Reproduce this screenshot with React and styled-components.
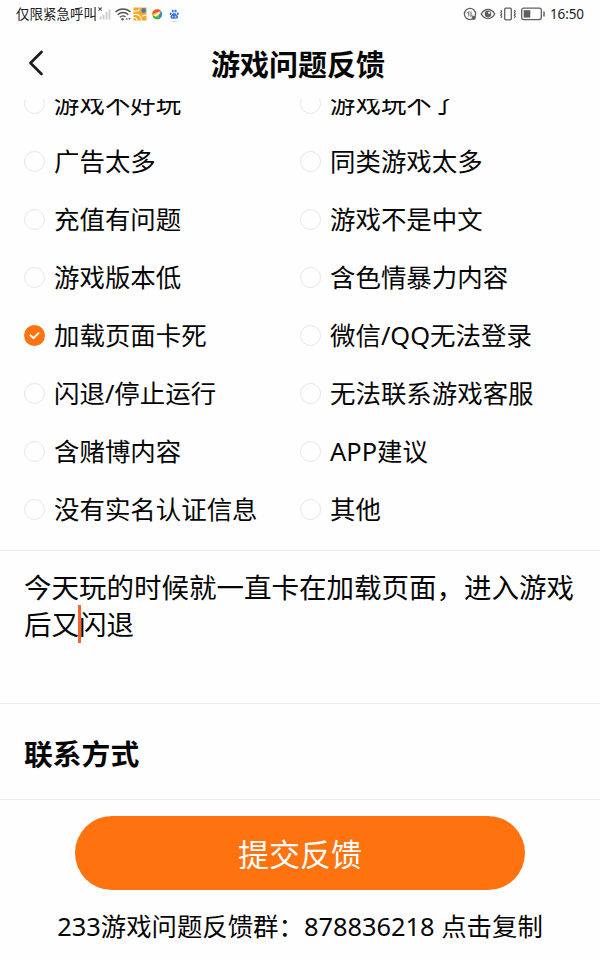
import React from "react";
import styled, { createGlobalStyle } from "styled-components";

const GlobalStyle = createGlobalStyle`
    * {
        box-sizing: border-box;
    }
    body {
        margin: 0;
        background: #fefefe;
        color: #060606;
        font-family: "Noto Sans", "Noto Sans CJK SC", sans-serif;
    }
`
const Page = styled.div`
    width: 600px;
    height: 960px;
    display: flex;
    flex-direction: column;
    overflow: hidden;
    background: #fefefe;
`
const StatusBar = styled.div`
    height: 28px;
    flex: none;
    display: flex;
    align-items: center;
    justify-content: space-between;
    padding: 0 16px;
    font-size: 13.5px;
    line-height: 28px;
    color: #222;
`
const StatusGroup = styled.div`
    display: flex;
    align-items: center;
    svg {
        display: block;
    }
`
const Clock = styled.span`
    font-size: 13.5px;
    letter-spacing: -0.1px;
    margin-left: 4px;
`
const Header = styled.header`
    height: 71px;
    flex: none;
    display: grid;
    grid-template-columns: 60px 1fr 64px;
    align-items: center;
`
const BackButton = styled.button`
    border: 0;
    background: none;
    padding: 0 0 1px 27px;
    height: 40px;
    display: flex;
    align-items: center;
`
const Title = styled.h1`
    margin: 3px 0 0;
    font-size: 29px;
    line-height: 40px;
    font-weight: 700;
    text-align: center;
`
const OptionList = styled.div`
    height: 451px;
    flex: none;
    overflow: hidden;
    display: flex;
    flex-direction: column;
    justify-content: flex-end;
    padding: 0 24px 12px;
`
const OptionRow = styled.div`
    flex: none;
    height: 58px;
    display: grid;
    grid-template-columns: 276px 276px;
    align-items: center;
`
const Option = styled.label`
    display: flex;
    align-items: center;
    gap: 9px;
    font-size: 25.45px;
    line-height: 36px;
    white-space: nowrap;
`
const OptionText = styled.span`
    padding-bottom: 1px;
`
const Radio = styled.span`
    width: 21px;
    height: 21px;
    flex: none;
    display: flex;
    align-items: center;
    justify-content: center;
    border-radius: 50%;
    border: ${(props) => (props.$checked ? "0" : "1.5px solid #e6e6e6")};
    background: ${(props) => (props.$checked ? "#ff7210" : "transparent")};
`
const Description = styled.div`
    height: 153px;
    flex: none;
    border-top: 1px solid #ebebeb;
    padding: 18px 24px 0;
    font-size: 27.5px;
    line-height: 37px;
`
const Line = styled.div`
    display: flex;
    white-space: nowrap;
`
const Caret = styled.span`
    width: 3px;
    height: 38px;
    margin: -1px -2px 0 -1px;
    background: #f0662c;
`
const Contact = styled.section`
    height: 96px;
    flex: none;
    border-top: 1px solid #ebebeb;
    padding: 0 24px;
    display: flex;
    align-items: center;
`
const SectionTitle = styled.h2`
    margin: 5px 0 0;
    font-size: 28.8px;
    line-height: 40px;
    font-weight: 700;
`
const Footer = styled.footer`
    flex: 1;
    border-top: 1px solid #ebebeb;
    padding-top: 16px;
    display: flex;
    flex-direction: column;
    align-items: center;
`
const SubmitButton = styled.button`
    width: 450px;
    height: 74px;
    border: 0;
    border-radius: 37px;
    padding: 2px 0 0;
    background: #ff7210;
    color: #fff;
    font-family: inherit;
    font-size: 31px;
    line-height: 40px;
`
const GroupLink = styled.p`
    margin: 18px 0 0;
    font-size: 25.4px;
    line-height: 36px;
    white-space: nowrap;
`

const rows = [
    ["游戏不好玩", "游戏玩不了"],
    ["广告太多", "同类游戏太多"],
    ["充值有问题", "游戏不是中文"],
    ["游戏版本低", "含色情暴力内容"],
    ["加载页面卡死", "微信/QQ无法登录"],
    ["闪退/停止运行", "无法联系游戏客服"],
    ["含赌博内容", "APP建议"],
    ["没有实名认证信息", "其他"],
]
const selected = "加载页面卡死"

function LeftIcons() {
    return (
        <svg width="84" height="18" viewBox="0 0 84 18" fill="none">
            {/* no sim signal */}
            <path d="M1.5 2.5l3.2 3.2M4.7 2.5L1.500 5.700" stroke="#555" strokeWidth="1.1" />
            <path d="M3.500 14.500v-3M6.500 14.500v-5M9.500 14.500v-7.500M12.500 14.500V4.500" stroke="#cfcfcf" strokeWidth="2" />
            {/* wifi */}
            <path d="M18.500 7a11 11 0 0 1 15 0M20.700 9.700a7.500 7.500 0 0 1 10.600 0M23 12.200a4.300 4.300 0 0 1 5.500-.3" stroke="#555" strokeWidth="1.4" />
            <circle cx="25.500" cy="14.200" r="1.200" fill="#555" />
            <path d="M28.500 14.500l1.300-1.800 1.200 1.800zM31.300 13l1.200 1.800 1.200-1.800z" fill="#555" />
            {/* gallery app */}
            <rect x="36.500" y="2.500" width="13" height="13" fill="#f5a92b" />
            <path d="M36.500 6h4.500l1.500-2M36.500 9.500c5-.5 8 1.500 8 6M40 15.500c0-2-1.500-3-3.500-3M45 11l4.500-1" stroke="#fff" strokeWidth="1.100" />
            <circle cx="46.700" cy="5.500" r="2.400" fill="#4b76c4" />
            {/* browser app */}
            <circle cx="60.200" cy="9.300" r="5" fill="#f6c11d" />
            <path d="M55.200 9.300a5 5 0 0 1 8.800-3.200l-5 1.400z" fill="#ef4d3c" />
            <path d="M64 6.100a5 5 0 0 1-1 7.300l-2.200-1.200z" fill="#2b93e0" />
            <path d="M55.400 10.500a5 5 0 0 0 7.600 2.900l-2.200-1.700z" fill="#34b04d" />
            <path d="M57 10.500l5-3.400 1 .8-4.700 3.800z" fill="#fff" />
            {/* baidu paw */}
            <g fill="#3d74df">
                <ellipse cx="73.600" cy="8.800" rx="1" ry="1.400" />
                <ellipse cx="75.800" cy="6" rx="1.100" ry="1.600" />
                <ellipse cx="78.600" cy="6" rx="1.100" ry="1.600" />
                <ellipse cx="80.800" cy="8.800" rx="1" ry="1.400" />
                <path d="M77.200 8c1.700 0 2 1.600 3.200 2.600 1.200 1.100 1 3.200-1.200 3.100h-4c-2.200.1-2.400-2-1.200-3.100C75.200 9.600 75.500 8 77.200 8z" />
            </g>
            <path d="M75.700 11v1.500M78.200 10.800v1.500h1.300" stroke="#fff" strokeWidth=".7" />
            <path d="M74.700 16.500h5" stroke="#c9c9c9" strokeWidth=".8" />
        </svg>
    )
}

function RightIcons() {
    return (
        <svg width="83" height="18" viewBox="0 0 83 18" fill="none" stroke="#606060">
            {/* data saver */}
            <circle cx="7" cy="9" r="5.600" strokeWidth="1.300" />
            <path d="M5.800 11.500V6.500L4 8.300M8 6.500v5l1.600-1.600" strokeWidth="1" />
            <circle cx="10.800" cy="12.800" r="2.100" fill="#606060" stroke="none" />
            {/* eye comfort */}
            <path d="M18.200 9c3.600-6 10-6 13.600 0-3.600 6-10 6-13.600 0z" strokeWidth="1.400" />
            <circle cx="25" cy="9" r="3.300" fill="#606060" stroke="none" />
            <circle cx="26.200" cy="7.800" r="1.100" fill="#fff" stroke="none" />
            {/* vibrate */}
            <rect x="41.700" y="3.200" width="6.600" height="11.600" rx="1" strokeWidth="1.300" />
            <path d="M37.700 5l1 1.300-1 1.300 1 1.300-1 1.300 1 1.300-1 1.300M51.300 5l1 1.300-1 1.300 1 1.300-1 1.300 1 1.300-1 1.300" strokeWidth="1.200" />
            {/* battery */}
            <rect x="58.700" y="3.200" width="19.600" height="11.400" rx="2" strokeWidth="1.300" />
            <rect x="60.700" y="5.200" width="6.600" height="7.400" fill="#606060" stroke="none" />
            <path d="M81 6.500v5" strokeWidth="1.500" />
        </svg>
    )
}

function OptionItem({ label }) {
    const checked = label === selected
    return (
        <Option>
            <Radio $checked={checked}>
                {checked && (
                    <svg width="21" height="21" viewBox="0 0 21 21" fill="none">
                        <path d="M6.500 10.400l3 2.700 5-5" stroke="#fff" strokeWidth="2" strokeLinecap="round" strokeLinejoin="round" />
                    </svg>
                )}
            </Radio>
            <OptionText>{label}</OptionText>
        </Option>
    )
}

export default function App() {
    return (
        <>
        <GlobalStyle />
        <Page>
            <StatusBar>
                <StatusGroup>
                    <span>仅限紧急呼叫</span>
                    <LeftIcons />
                </StatusGroup>
                <StatusGroup>
                    <RightIcons />
                    <Clock>16:50</Clock>
                </StatusGroup>
            </StatusBar>
            <Header>
                <BackButton aria-label="返回">
                    <svg width="18" height="26" viewBox="0 0 18 26" fill="none">
                        <path d="M14.500 2L3.500 13l11 11" stroke="#1c1c1c" strokeWidth="2.700" strokeLinecap="round" strokeLinejoin="round" />
                    </svg>
                </BackButton>
                <Title>游戏问题反馈</Title>
            </Header>
            <OptionList>
                {rows.map((row) => (
                    <OptionRow key={row[0]}>
                        <OptionItem label={row[0]} />
                        <OptionItem label={row[1]} />
                    </OptionRow>
                ))}
            </OptionList>
            <Description>
                <Line>今天玩的时候就一直卡在加载页面，进入游戏</Line>
                <Line>后又<Caret />闪退</Line>
            </Description>
            <Contact>
                <SectionTitle>联系方式</SectionTitle>
            </Contact>
            <Footer>
                <SubmitButton>提交反馈</SubmitButton>
                <GroupLink>233游戏问题反馈群：878836218 点击复制</GroupLink>
            </Footer>
        </Page>
        </>
    )
}
